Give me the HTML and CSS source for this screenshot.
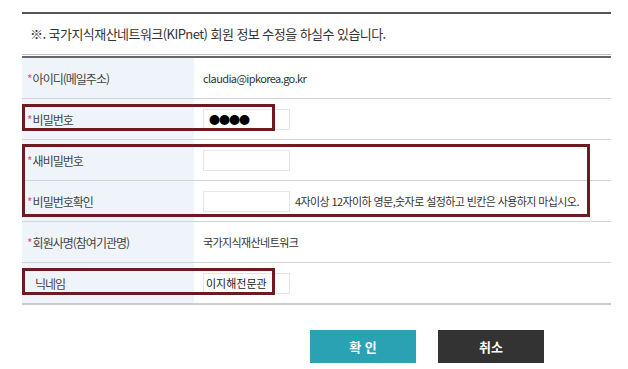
FILE: index.html
```html
<!DOCTYPE html>
<html lang="ko">
<head>
    <meta charset="UTF-8">
    <meta name="viewport" content="width=device-width, initial-scale=1.0">
    <title>회원 정보 수정</title>
    <link rel="stylesheet" href="styles.css">
</head>
<body>
<div class="wrap">
    <p class="notice">※. 국가지식재산네트워크(KIPnet) 회원 정보 수정을 하실수 있습니다.</p>
    <div class="form">
        <div class="row">
            <div class="label"><span class="req">*</span>아이디(메일주소)</div>
            <div class="value">claudia@ipkorea.go.kr</div>
        </div>
        <div class="row marked">
            <div class="label"><span class="req">*</span>비밀번호</div>
            <div class="value"><input class="field pw" type="text" value="●●●●" readonly></div>
        </div>
        <div class="group marked-wide">
            <div class="row">
                <div class="label"><span class="req">*</span>새비밀번호</div>
                <div class="value"><input class="field" type="password"></div>
            </div>
            <div class="row">
                <div class="label"><span class="req">*</span>비밀번호확인</div>
                <div class="value">
                    <input class="field" type="password">
                    <span class="hint">4자이상 12자이하 영문,숫자로 설정하고 빈칸은 사용하지 마십시오.</span>
                </div>
            </div>
        </div>
        <div class="row">
            <div class="label"><span class="req">*</span>회원사명(참여기관명)</div>
            <div class="value">국가지식재산네트워크</div>
        </div>
        <div class="row marked last">
            <div class="label plain">닉네임</div>
            <div class="value"><input class="field" type="text" value="이지해전문관"></div>
        </div>
    </div>
    <div class="actions">
        <button class="btn ok">확 인</button>
        <button class="btn cancel">취소</button>
    </div>
</div>
</body>
</html>
```

FILE: styles.css
```css
body {
    margin: 0;
    background-color: #fff;
    color: #333;
    font-family: "Noto Sans CJK KR", "Noto Sans", sans-serif;
}

.wrap {
    width: 589px;
    margin: 12px 0 0 22px;
}

.notice {
    margin: 0;
    height: 40px;
    line-height: 40px;
    padding-left: 8px;
    border-top: 2px solid #555;
    border-bottom: 1px solid #bbb;
    font-size: 13px;
    letter-spacing: -0.55px;
    color: #333;
}

.form {
    margin-top: 1px;
    border-top: 2px solid #666;
}

.row {
    display: flex;
    height: 40px;
    border-bottom: 1px solid #d3d3d3;
}

.row.last {
    border-bottom: 2px solid #ccc;
}

.label {
    width: 172px;
    box-sizing: border-box;
    display: flex;
    align-items: center;
    padding-left: 5px;
    background-color: #eef4f9;
    font-size: 12px;
    letter-spacing: -1px;
    color: #444;
}

.label.plain {
    padding-left: 13px;
}

.req {
    color: #e6557a;
    margin-right: 1px;
}

.value {
    flex: 1;
    display: flex;
    align-items: center;
    padding-left: 9px;
    font-size: 11px;
    letter-spacing: -0.6px;
    color: #333;
}

.field {
    width: 87px;
    height: 21px;
    box-sizing: border-box;
    padding: 0 2px;
    border: 1px solid #e6e6e6;
    background: #fff;
    font-family: "Noto Sans CJK KR", sans-serif;
    font-size: 11px;
    color: #222;
    outline: none;
}

.field.pw {
    padding-left: 5px;
    font-size: 11px;
    letter-spacing: -1px;
    color: #000;
}

.hint {
    margin-left: 5px;
    white-space: nowrap;
    font-size: 11px;
    letter-spacing: -0.6px;
}

/* red highlight boxes drawn over the rows */
.marked,
.marked-wide {
    position: relative;
}

.marked::after,
.marked-wide::after {
    content: "";
    position: absolute;
    left: 0;
    top: 5px;
    width: 253px;
    height: 27px;
    box-sizing: border-box;
    border: 3px solid #6a1c1f;
    pointer-events: none;
}

.marked-wide::after {
    top: 4px;
    bottom: 5px;
    height: auto;
    width: 568px;
}

.actions {
    display: flex;
    gap: 22px;
    margin-top: 25px;
    padding-left: 288px;
}

.btn {
    width: 106px;
    height: 33px;
    border: none;
    color: #fff;
    font-family: "Noto Sans CJK KR", sans-serif;
    font-size: 13px;
    font-weight: bold;
    cursor: pointer;
}

.btn.ok {
    background-color: #2ba2b4;
}

.btn.cancel {
    background-color: #333;
}
```
